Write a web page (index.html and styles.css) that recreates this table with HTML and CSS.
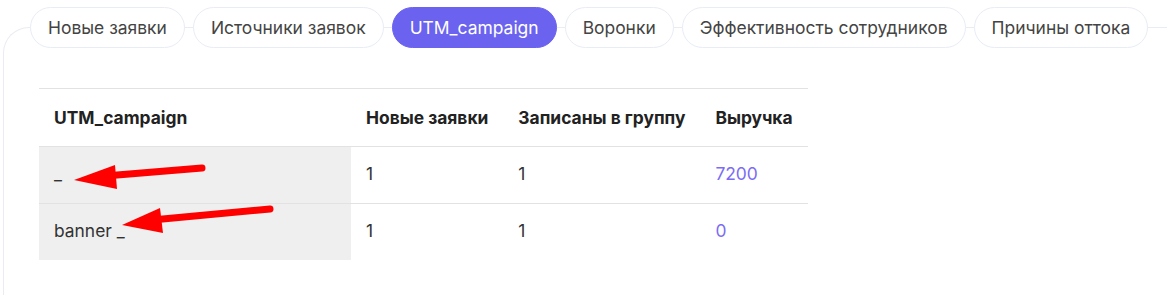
FILE: index.html
```html
<!DOCTYPE html>
<html lang="ru">
<head>
<meta charset="utf-8">
<link rel="stylesheet" href="styles.css">
</head>
<body>
<div class="card">
  <nav class="tabs">
    <span class="tab">Новые заявки</span>
    <span class="tab">Источники заявок</span>
    <span class="tab active">UTM_campaign</span>
    <span class="tab">Воронки</span>
    <span class="tab">Эффективность сотрудников</span>
    <span class="tab">Причины оттока</span>
  </nav>
  <table class="report">
    <thead>
      <tr>
        <th class="c1">UTM_campaign</th>
        <th class="c2">Новые заявки</th>
        <th class="c3">Записаны в группу</th>
        <th class="c4">Выручка</th>
      </tr>
    </thead>
    <tbody>
      <tr>
        <td class="c1 key">_</td>
        <td>1</td>
        <td>1</td>
        <td class="money">7200</td>
      </tr>
      <tr>
        <td class="c1 key">banner _</td>
        <td>1</td>
        <td>1</td>
        <td class="money">0</td>
      </tr>
    </tbody>
  </table>
</div>
<svg class="arrows" width="1167" height="295" viewBox="0 0 1167 295">
  <g fill="#ff0000" stroke="#ff0000" stroke-linecap="round">
    <line x1="202" y1="168" x2="105" y2="176" stroke-width="7"/>
    <polygon points="74,180 115,165 117,189" stroke="none"/>
    <line x1="270" y1="209" x2="152" y2="220" stroke-width="7"/>
    <polygon points="122,225 160,208 163,233" stroke="none"/>
  </g>
</svg>
</body>
</html>
```
FILE: styles.css
```css
html, body {
  margin: 0;
  padding: 0;
  background: #fff;
  overflow: hidden;
}
body {
  width: 1167px;
  height: 295px;
  position: relative;
  font-family: Inter, "Noto Sans", sans-serif;
  color: #222;
}
.card {
  box-sizing: border-box;
  margin: 27px 0 0 3px;
  border: 1px solid #e9ecf3;
  border-right: none;
  border-bottom: none;
  border-top-left-radius: 26px;
  height: 268px;
}
.tabs {
  display: flex;
  gap: 8px;
  margin-top: -21px;
  padding-left: 26px;
}
.tab {
  display: inline-flex;
  align-items: center;
  height: 39px;
  padding: 0 17px;
  border: 1px solid #e8ecf5;
  border-radius: 21px;
  background: #fff;
  font-size: 17.45px;
  color: #444;
  white-space: nowrap;
}
.tab.active {
  background: #6b63ef;
  border-color: #6b63ef;
  color: #fff;
}
.report {
  margin: 40px 0 0 35px;
  border-collapse: collapse;
  font-size: 17.4px;
}
.report th,
.report td {
  text-align: left;
  padding: 0 15px;
  border-top: 1px solid #e2e2e2;
}
.report th {
  height: 57px;
  font-weight: 700;
  color: #222;
}
.report td {
  height: 53px;
  padding-bottom: 3px;
  color: #333;
}
.report .c1 { width: 282px; }
.report td.key { background: #efefef; }
.report .money { color: #7a6cf4; }
.arrows {
  position: absolute;
  left: 0;
  top: 0;
  pointer-events: none;
}
```
